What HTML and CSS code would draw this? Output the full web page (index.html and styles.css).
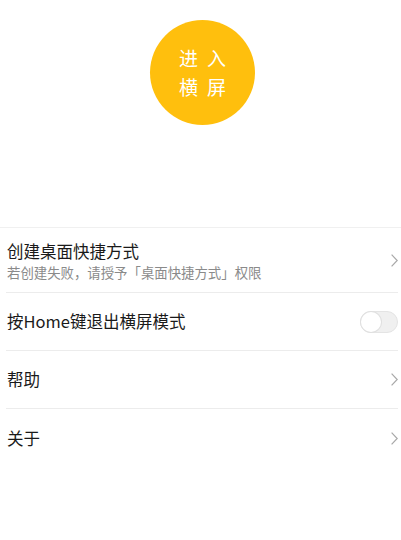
FILE: index.html
```html
<!DOCTYPE html>
<html lang="zh-CN">
<head>
  <meta charset="UTF-8" />
  <meta name="viewport" content="width=device-width, initial-scale=1.0"/>
  <title>横屏</title>
  <link rel="stylesheet" href="styles.css">
</head>
<body>

  <!-- 顶部按钮 -->
  <div class="hero">
    <button class="enter-btn">
      <span>进入</span>
      <span>横屏</span>
    </button>
  </div>

  <!-- 设置列表 -->
  <ul class="settings">
    <li class="item">
      <div class="item-text">
        <div class="item-title">创建桌面快捷方式</div>
        <div class="item-sub">若创建失败，请授予「桌面快捷方式」权限</div>
      </div>
      <svg class="chevron" viewBox="0 0 7 13"><path d="M0.6 0.6 L6.2 6.5 L0.6 12.4" /></svg>
    </li>
    <li class="item">
      <div class="item-title">按Home键退出横屏模式</div>
      <span class="switch"><span class="knob"></span></span>
    </li>
    <li class="item">
      <div class="item-title">帮助</div>
      <svg class="chevron" viewBox="0 0 7 13"><path d="M0.6 0.6 L6.2 6.5 L0.6 12.4" /></svg>
    </li>
    <li class="item last">
      <div class="item-title">关于</div>
      <svg class="chevron" viewBox="0 0 7 13"><path d="M0.6 0.6 L6.2 6.5 L0.6 12.4" /></svg>
    </li>
  </ul>

</body>
</html>
```

FILE: styles.css
```css
/*── 全体 ──*/
body {
  margin: 0;
  font-family: "Noto Sans CJK SC", "Noto Sans", sans-serif;
  background: #fff;
  color: #1a1a1a;
}
/*── 顶部 ──*/
.hero {
  height: 228px;
  padding-top: 20px;
  box-sizing: border-box;
  border-bottom: 1px solid #f0f0f0;
}
.enter-btn {
  display: flex;
  flex-direction: column;
  justify-content: center;
  align-items: center;
  width: 105px;
  height: 105px;
  margin-left: 150px;
  padding: 0 0 2px 9px;
  border: none;
  border-radius: 50%;
  background: #ffbf0d;
  color: #fff;
  font-family: inherit;
  font-size: 19px;
  line-height: 29px;
  letter-spacing: 9px;
  cursor: pointer;
}
/*── 列表 ──*/
.settings {
  list-style: none;
  margin: 0;
  padding: 0 3px 0 6px;
}
.item {
  display: flex;
  align-items: center;
  justify-content: space-between;
  height: 58px;
  border-bottom: 1px solid #ececec;
  box-sizing: border-box;
}
.item:first-child {
  height: 65px;
}
.item.last {
  border-bottom: none;
}
.item-text {
  padding-top: 2px;
}
.item-title {
  font-size: 16.5px;
  line-height: 21px;
  padding-left: 1px;
}
.item-sub {
  margin-top: 1px;
  font-size: 13.4px;
  line-height: 19px;
  color: #8a8a8a;
  padding-left: 1px;
}
.chevron {
  width: 7px;
  height: 13px;
  fill: none;
  stroke: #a8a8a8;
  stroke-width: 1.2;
}
.switch {
  position: relative;
  width: 38px;
  height: 22px;
  border-radius: 11px;
  background: #f0f0f0;
  border: 1px solid #e4e4e4;
  box-sizing: border-box;
}
.knob {
  position: absolute;
  top: 0;
  left: 0;
  width: 20px;
  height: 20px;
  border-radius: 50%;
  background: #fff;
  box-shadow: 0 0 0 1px #e0e0e0;
}
```
